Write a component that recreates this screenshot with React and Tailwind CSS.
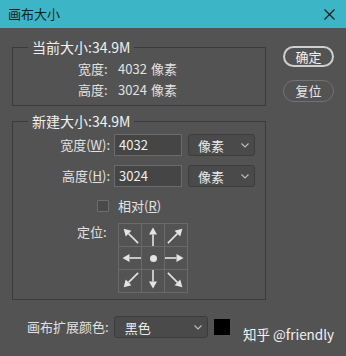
import React from "react";

const FONT = "font-['Noto_Sans_CJK_SC','Noto_Sans',sans-serif]";

function Arrow({ dx, dy }) {
  const c = 11;
  const diag = dx !== 0 && dy !== 0;
  const n = diag ? Math.SQRT1_2 : 1;
  const ux = dx * n;
  const uy = dy * n;
  const tipLen = diag ? 9 : 7.5;
  const tailLen = diag ? 11.5 : 11;
  const head = 7;
  const half = 4;
  const tip = [c + ux * tipLen, c + uy * tipLen];
  const tail = [c - ux * tailLen, c - uy * tailLen];
  const base = [tip[0] - ux * head, tip[1] - uy * head];
  const px = -uy;
  const py = ux;
  const p1 = [base[0] + px * half, base[1] + py * half];
  const p2 = [base[0] - px * half, base[1] - py * half];
  return (
    <svg width="22" height="22" viewBox="0 0 22 22">
      <line x1={tail[0]} y1={tail[1]} x2={base[0]} y2={base[1]} stroke="#e4e4e4" strokeWidth="1.6" />
      <polygon points={`${tip[0]},${tip[1]} ${p1[0]},${p1[1]} ${p2[0]},${p2[1]}`} fill="#e4e4e4" />
    </svg>
  );
}

function Chevron() {
  return (
    <svg width="8" height="5" viewBox="0 0 8 5">
      <polyline points="0.5,0.5 4,4 7.5,0.5" fill="none" stroke="#bdbdbd" strokeWidth="1.1" />
    </svg>
  );
}

function Select({ value, className }) {
  return (
    <div className={`flex items-center justify-between h-[22px] rounded-[3px] border border-[#3c3c3c] bg-[#4a4a4a] text-[#ececec] ${className}`}>
      <span className="leading-none">{value}</span>
      <Chevron />
    </div>
  );
}

function Group({ title, className, children }) {
  return (
    <div className={`relative border border-[#3b3b3b] ${className}`}>
      <span className="absolute -top-[10px] left-[15px] px-[4px] bg-[#535353] text-[14px] leading-[18px] text-[#f0f0f0]">
        {title}
      </span>
      {children}
    </div>
  );
}

const dirs = [
  [-1, -1], [0, -1], [1, -1],
  [-1, 0], null, [1, 0],
  [-1, 1], [0, 1], [1, 1],
];

export default function App() {
  return (
    <div className={`relative w-[346px] h-[356px] bg-[#535353] text-[13px] text-[#e2e2e2] flex flex-col ${FONT}`}>
      <div className="h-[28px] bg-[#3cb6c6] flex items-center justify-between pl-[8px] pr-[11px] text-[#1c1c1c] text-[13px]">
        <span>画布大小</span>
        <svg width="11" height="11" viewBox="0 0 11 11">
          <path d="M0.5 0.5 L10.5 10.5 M10.5 0.5 L0.5 10.5" stroke="#1c1c1c" strokeWidth="1.2" />
        </svg>
      </div>

      <div className="flex">
        <div className="pl-[12px] w-[266px]">
          <Group title="当前大小:34.9M" className="mt-[19px] h-[59px] pt-[10px] pl-[65px]">
            <div className="flex items-center h-[21px]">
              <span className="w-[40px]">宽度:</span>
              <span className="w-[33px]">4032</span>
              <span>像素</span>
            </div>
            <div className="flex items-center h-[21px]">
              <span className="w-[40px]">高度:</span>
              <span className="w-[33px]">3024</span>
              <span>像素</span>
            </div>
          </Group>

          <Group title="新建大小:34.9M" className="mt-[15px] h-[179px] pt-[12px]">
            <div className="flex items-center h-[22px]">
              <span className="w-[97px] text-right">宽度(<span className="underline">W</span>):</span>
              <div className="ml-[4px] w-[68px] h-[22px] border border-[#6b6b6b] bg-[#454545] flex items-center pl-[4px] text-[#f0f0f0]">4032</div>
              <Select value="像素" className="ml-[6px] w-[67px] pl-[9px] pr-[5px]" />
            </div>
            <div className="flex items-center h-[22px] mt-[9px]">
              <span className="w-[97px] text-right">高度(<span className="underline">H</span>):</span>
              <div className="ml-[4px] w-[68px] h-[22px] border border-[#6b6b6b] bg-[#454545] flex items-center pl-[4px] text-[#f0f0f0]">3024</div>
              <Select value="像素" className="ml-[6px] w-[67px] pl-[9px] pr-[5px]" />
            </div>
            <div className="flex items-center h-[20px] mt-[9px] pl-[84px]">
              <div className="w-[12px] h-[12px] border border-[#6e6e6e] bg-[#4a4a4a] rounded-[1px]" />
              <span className="ml-[9px]">相对(<span className="underline">R</span>)</span>
            </div>
            <div className="flex mt-[7px] pl-[64px]">
              <span className="w-[41px] leading-[17px]">定位:</span>
              <div className="grid grid-cols-3 border-l border-t border-[#6a6a6a]">
                {dirs.map((d, i) => (
                  <div key={i} className="w-[23px] h-[23px] border-r border-b border-[#6a6a6a] flex items-center justify-center">
                    {d ? (
                      <Arrow dx={d[0]} dy={d[1]} />
                    ) : (
                      <div className="w-[7px] h-[7px] rounded-full bg-[#e4e4e4]" />
                    )}
                  </div>
                ))}
              </div>
            </div>
          </Group>
        </div>

        <div className="ml-[17px] pt-[18px] flex flex-col gap-[13px]">
          <div className="w-[51px] h-[21px] rounded-full border-[2px] border-[#cfcfcf] flex items-center justify-center text-[#f4f4f4]">确定</div>
          <div className="w-[51px] h-[22px] rounded-full border border-[#727272] flex items-center justify-center text-[#e8e8e8]">复位</div>
        </div>
      </div>

      <div className="flex items-center mt-[16px] pl-[27px]">
        <span>画布扩展颜色:</span>
        <Select value="黑色" className="ml-[5px] w-[94px] pl-[10px] pr-[5px]" />
        <div className="ml-[6px] w-[16px] h-[16px] bg-black" />
      </div>

      <span className="absolute left-[243px] top-[324px] text-[13.5px] leading-[20px] text-[#f2f2f2]">知乎 @friendly</span>
    </div>
  );
}
